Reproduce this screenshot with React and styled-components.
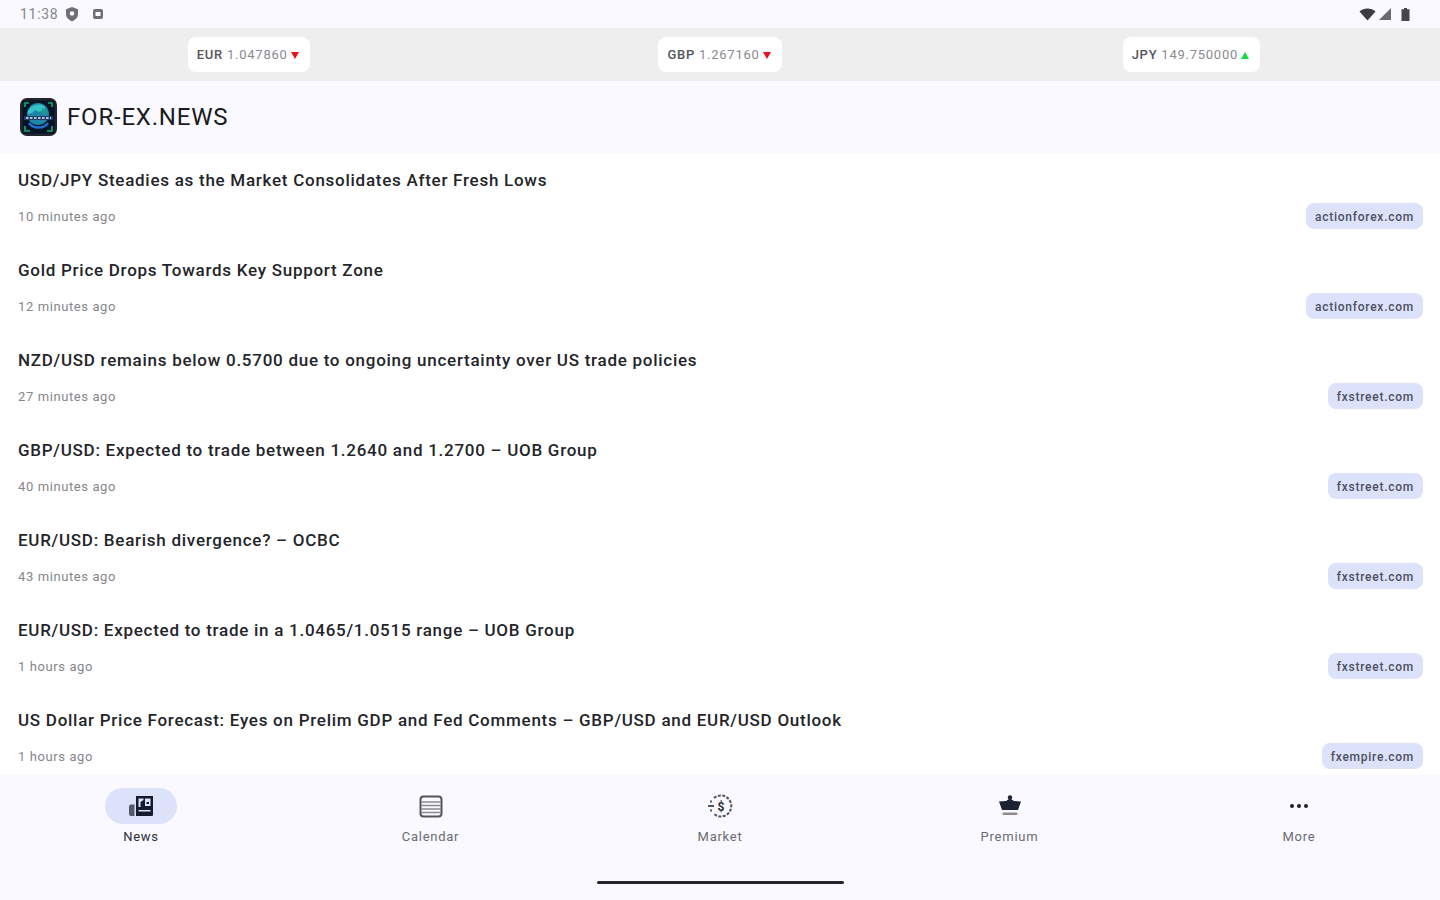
import React from "react";
import styled, { createGlobalStyle } from "styled-components";

const GlobalStyle = createGlobalStyle`
  html, body {
    margin: 0;
    padding: 0;
    background: #ffffff;
  }
  * {
    box-sizing: border-box;
  }
`;

const Screen = styled.div`
  width: 1440px;
  height: 900px;
  display: flex;
  flex-direction: column;
  overflow: hidden;
  background: #ffffff;
  font-family: Roboto, "Liberation Sans", sans-serif;
`;

const StatusBar = styled.div`
  height: 28px;
  flex: none;
  background: #f9f9ff;
  display: flex;
  align-items: center;
  justify-content: space-between;
  padding: 0 30px 0 20px;
  color: #6f7076;
`;

const StatusGroup = styled.div`
  display: flex;
  align-items: center;
  gap: ${(p) => p.$gap || 0}px;
`;

const Clock = styled.span`
  font-size: 14px;
  letter-spacing: 0.7px;
  color: #85868c;
  margin-right: 6px;
`;

const Ticker = styled.div`
  height: 53px;
  flex: none;
  background: #eeeeee;
  display: grid;
  grid-template-columns: repeat(3, 1fr);
  align-items: center;
  justify-items: center;
  padding: 0 13px;
`;

const Quote = styled.div`
  height: 35px;
  display: flex;
  align-items: center;
  gap: 3px;
  padding: 0 11px 0 9px;
  background: #ffffff;
  border-radius: 8px;
  font-size: 13px;
  letter-spacing: 0.75px;
  white-space: nowrap;
`;

const Currency = styled.span`
  font-weight: 500;
  color: #55565b;
`;

const Rate = styled.span`
  color: #8a8b90;
`;

const Arrow = styled.span`
  width: 0;
  height: 0;
  margin-top: 2px;
  border-left: 4px solid transparent;
  border-right: 4px solid transparent;
  border-top: ${(p) => (p.$up ? "0" : "7px solid #f00f1e")};
  border-bottom: ${(p) => (p.$up ? "7px solid #10dc3c" : "0")};
`;

const Header = styled.header`
  height: 72px;
  flex: none;
  background: #f9f9ff;
  display: flex;
  align-items: center;
  gap: 10px;
  padding: 0 20px;
`;

const Brand = styled.h1`
  margin: 0;
  font-size: 24px;
  font-weight: 400;
  letter-spacing: 0.8px;
  color: #1a1b20;
  line-height: 1;
`;

const List = styled.main`
  flex: 1;
  min-height: 0;
  overflow: hidden;
  background: #ffffff;
`;

const Article = styled.article`
  height: 90px;
  padding: 17px 17px 0 18px;
`;

const Title = styled.div`
  font-size: 17px;
  font-weight: 500;
  line-height: 20px;
  letter-spacing: 0.73px;
  color: #24252a;
  white-space: nowrap;
`;

const Meta = styled.div`
  display: flex;
  align-items: center;
  justify-content: space-between;
  margin-top: 13px;
  height: 26px;
`;

const Age = styled.span`
  font-size: 13px;
  letter-spacing: 0.6px;
  color: #85868c;
`;

const Source = styled.span`
  height: 26px;
  display: flex;
  align-items: center;
  padding: 1px 9px 0;
  border-radius: 8px;
  background: #dce2f9;
  color: #4d5063;
  font-size: 12px;
  font-weight: 500;
  letter-spacing: 0.75px;
`;

const BottomNav = styled.nav`
  height: 125px;
  flex: none;
  background: #f9f9ff;
  display: flex;
  flex-direction: column;
  align-items: center;
`;

const NavRow = styled.div`
  align-self: stretch;
  display: flex;
  justify-content: space-between;
  padding: 13px 105px 0;
`;

const NavItem = styled.div`
  width: 72px;
  display: flex;
  flex-direction: column;
  align-items: center;
`;

const NavIcon = styled.div`
  width: 72px;
  height: 36px;
  border-radius: 18px;
  display: flex;
  align-items: center;
  justify-content: center;
  background: ${(p) => (p.$active ? "#dce2f9" : "transparent")};
  color: ${(p) => (p.$active ? "#151b2c" : "#55565d")};
`;

const NavLabel = styled.span`
  margin-top: 5px;
  font-size: 13px;
  line-height: 16px;
  font-weight: 400;
  letter-spacing: 0.75px;
  white-space: nowrap;
  color: ${(p) => (p.$active ? "#2c2d33" : "#6a6b72")};
`;

const HomeBar = styled.div`
  width: 247px;
  height: 3px;
  margin-top: 36px;
  border-radius: 2px;
  background: #26272b;
`;

const ShieldIcon = () => (
  <svg width="16" height="16" viewBox="0 0 15 16">
    <path fill="currentColor" d="M7.5 1 13.5 3.200V8c0 3.400-2.500 6-6 7.200C4 14 1.500 11.400 1.500 8V3.200Z" />
    <circle cx="7.500" cy="7.500" r="2.200" fill="#f9f9ff" />
  </svg>
);

const SquareIcon = () => (
  <svg width="12" height="12" viewBox="0 0 12 12">
    <rect x="1" y="1" width="10" height="10" rx="2" fill="currentColor" />
    <rect x="3.500" y="4" width="5" height="4" fill="#f9f9ff" />
  </svg>
);

const WifiIcon = () => (
  <svg width="17" height="13" viewBox="0 0 16 13">
    <path fill="#3c3d42" d="M0 3.500C2 1.500 5 .5 8 .5s6 1 8 3L8 12.500Z" />
  </svg>
);

const SignalIcon = () => (
  <svg width="12" height="12" viewBox="0 0 12 12">
    <path fill="#6a6b70" d="M12 0V12H0Z" />
  </svg>
);

const BatteryIcon = () => (
  <svg width="9" height="13" viewBox="0 0 8 13" style={{ marginLeft: 7 }}>
    <path fill="#45464b" d="M2.500 0h3v1.300H8V13H0V1.300h2.500Z" />
  </svg>
);

const Logo = () => (
  <svg width="37" height="38" viewBox="0 0 37 38">
    <rect width="37" height="38" rx="7" fill="#20252e" />
    <rect x="2.500" y="2.500" width="32" height="33" rx="3" fill="#071428" />
    <circle cx="18" cy="16" r="11" fill="#1f86a8" />
    <path fill="#35c2c4" d="M8 13c3-6 11-8 16-5 2 1.500 1 4-1 4l-4 2-4-2-3 3-4 1Z" />
    <path fill="#16a08a" d="M22 10l5 3v3l-5-1Z" />
    <path fill="#1d3f6a" d="M4 18h29v4H4Z" />
    <path stroke="#dfeef2" strokeWidth="1.600" strokeDasharray="2.500 1.500" d="M6 20h25" />
    <path stroke="#1f6fd0" strokeWidth="2.500" fill="none" d="M9 25c4 6 15 6 19 0" />
    <path stroke="#12b070" strokeWidth="1.600" fill="none" d="M5 28v5h5M32 28v5h-5M5 9V5h4M32 9V5h-4" />
  </svg>
);

const NewsIcon = () => (
  <svg width="26" height="22" viewBox="0 0 26 22">
    <path
      fill="currentColor"
      fillRule="evenodd"
      d="M8 1h17v19a1 1 0 0 1-1 1H8ZM10.500 3.500V12h2V7l3-2V3.500ZM17 3.500V11h5.500V3.500ZM10.500 15v1.500h12V15Z"
    />
    <path fill="#55596b" d="M1 11.500a2 2 0 0 1 2-2h3.500V21H3a2 2 0 0 1-2-2Z" />
    <path fill="#151b2c" d="M18.500 7h2.500v2h-2.500Z" />
  </svg>
);

const CalendarIcon = () => (
  <svg width="24" height="24" viewBox="0 0 24 24" fill="none">
    <rect x="1.500" y="2.500" width="21" height="20" rx="3" stroke="currentColor" strokeWidth="2" />
    <path stroke="#8b8c92" strokeWidth="1.500" d="M2 8h20M2 11.500h20M2 15h20M2 18.500h20" />
  </svg>
);

const MarketIcon = () => (
  <svg width="26" height="26" viewBox="0 0 26 26" fill="none" stroke="currentColor">
    <path strokeWidth="2" d="M7 5a10.500 10.500 0 1 1 0 16" strokeDasharray="3 1.400" />
    <path strokeWidth="2" d="M1 13h6M3 8.500h2M3 17.500h2" />
    <text
      x="14"
      y="17.500"
      fill="#2a2b30"
      stroke="none"
      fontSize="12"
      fontWeight="700"
      textAnchor="middle"
      fontFamily="Roboto, sans-serif"
    >
      $
    </text>
  </svg>
);

const CrownIcon = () => (
  <svg width="24" height="24" viewBox="0 0 24 24">
    <circle cx="12" cy="3.500" r="2.200" fill="#1b2233" />
    <path fill="#1b2233" d="M12 4.500 16 7 23 7.500 20 16H4L1 7.500 8 7Z" />
    <rect x="4.500" y="18.500" width="15" height="2.500" rx="1" fill="#8b8c92" />
  </svg>
);

const MoreIcon = () => (
  <svg width="24" height="24" viewBox="0 0 24 24" fill="#1f2026">
    <circle cx="5" cy="12" r="2" />
    <circle cx="12" cy="12" r="2" />
    <circle cx="19" cy="12" r="2" />
  </svg>
);

const quotes = [
  { code: "EUR", rate: "1.047860", up: false },
  { code: "GBP", rate: "1.267160", up: false },
  { code: "JPY", rate: "149.750000", up: true },
];

const articles = [
  { title: "USD/JPY Steadies as the Market Consolidates After Fresh Lows", age: "10 minutes ago", source: "actionforex.com" },
  { title: "Gold Price Drops Towards Key Support Zone", age: "12 minutes ago", source: "actionforex.com" },
  { title: "NZD/USD remains below 0.5700 due to ongoing uncertainty over US trade policies", age: "27 minutes ago", source: "fxstreet.com" },
  { title: "GBP/USD: Expected to trade between 1.2640 and 1.2700 – UOB Group", age: "40 minutes ago", source: "fxstreet.com" },
  { title: "EUR/USD: Bearish divergence? – OCBC", age: "43 minutes ago", source: "fxstreet.com" },
  { title: "EUR/USD: Expected to trade in a 1.0465/1.0515 range – UOB Group", age: "1 hours ago", source: "fxstreet.com" },
  { title: "US Dollar Price Forecast: Eyes on Prelim GDP and Fed Comments – GBP/USD and EUR/USD Outlook", age: "1 hours ago", source: "fxempire.com" },
];

const tabs = [
  { label: "News", icon: <NewsIcon />, active: true },
  { label: "Calendar", icon: <CalendarIcon /> },
  { label: "Market", icon: <MarketIcon /> },
  { label: "Premium", icon: <CrownIcon /> },
  { label: "More", icon: <MoreIcon /> },
];

const App = () => {
  return (
    <Screen>
      <GlobalStyle />
      <StatusBar>
        <StatusGroup $gap={12}>
          <StatusGroup>
            <Clock>11:38</Clock>
            <ShieldIcon />
          </StatusGroup>
          <SquareIcon />
        </StatusGroup>
        <StatusGroup $gap={3}>
          <WifiIcon />
          <SignalIcon />
          <BatteryIcon />
        </StatusGroup>
      </StatusBar>

      <Ticker>
        {quotes.map((q) => (
          <Quote key={q.code}>
            <span>
              <Currency>{q.code}</Currency> <Rate>{q.rate}</Rate>
            </span>
            <Arrow $up={q.up} />
          </Quote>
        ))}
      </Ticker>

      <Header>
        <Logo />
        <Brand>FOR-EX.NEWS</Brand>
      </Header>

      <List>
        {articles.map((a) => (
          <Article key={a.title}>
            <Title>{a.title}</Title>
            <Meta>
              <Age>{a.age}</Age>
              <Source>{a.source}</Source>
            </Meta>
          </Article>
        ))}
      </List>

      <BottomNav>
        <NavRow>
          {tabs.map((t) => (
            <NavItem key={t.label}>
              <NavIcon $active={t.active}>{t.icon}</NavIcon>
              <NavLabel $active={t.active}>{t.label}</NavLabel>
            </NavItem>
          ))}
        </NavRow>
        <HomeBar />
      </BottomNav>
    </Screen>
  );
};

export default App;
